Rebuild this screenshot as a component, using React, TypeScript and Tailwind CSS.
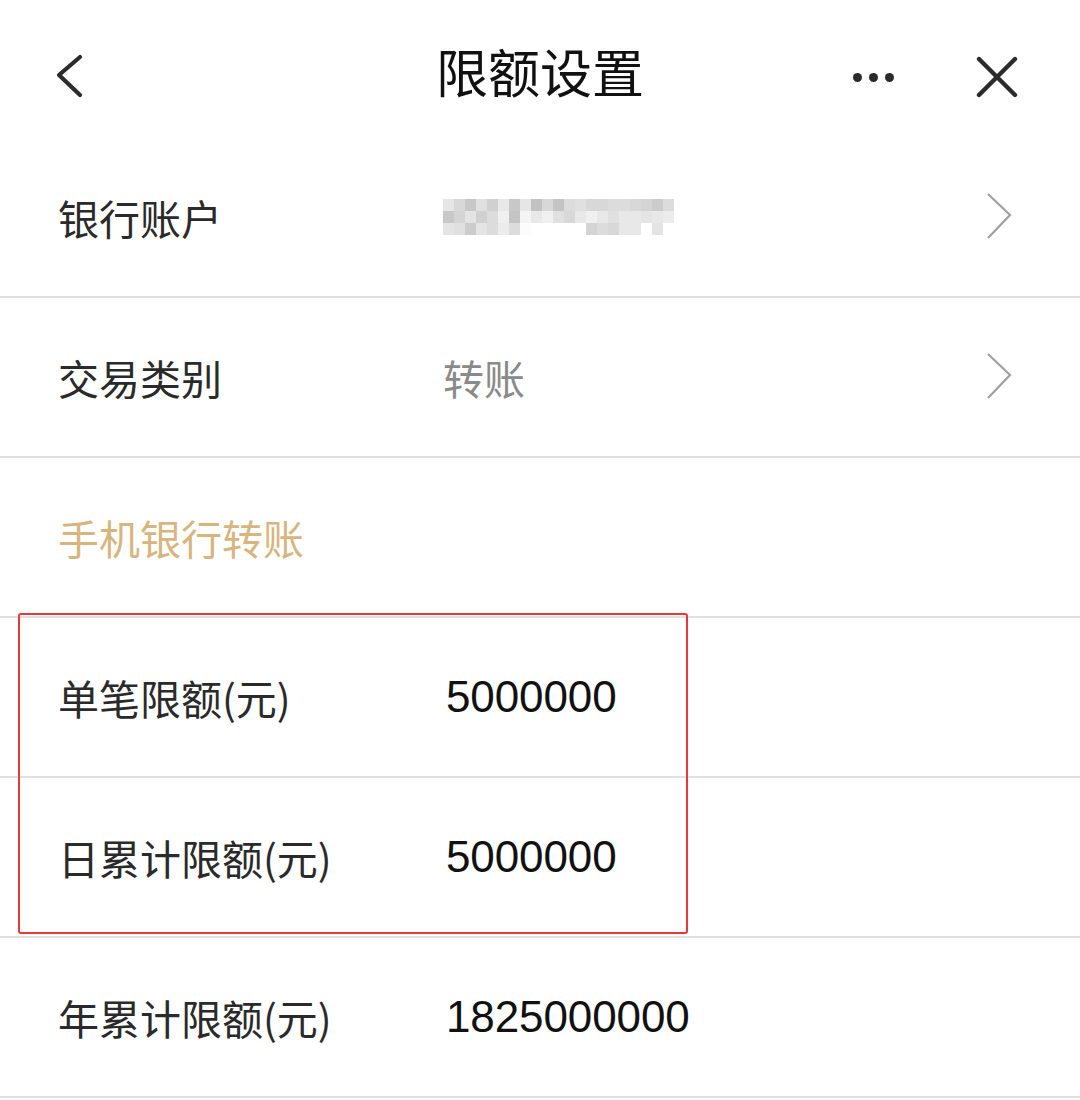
import React from "react";

const CJK = '"Noto Sans CJK SC", "Noto Sans", sans-serif';
const NUM = '"Liberation Sans", Arial, sans-serif';

const blur: string[][] = [
  ["e6", "d8", "c8", "e0", "d0", "e8", "c8", "e6", "c2", "d8", "c4", "dc", "e0", "d8", "d8", "dc", "dc", "d8", "d4", "cc", "dc"],
  ["c8", "d4", "e4", "d0", "dc", "f0", "c4", "f4", "e8", "f0", "e0", "d8", "e8", "f0", "e8", "e0", "e8", "e8", "e4", "e8", "ec"],
  ["e4", "e0", "cc", "e4", "dc", "ec", "dc", "fc", "ff", "ff", "ff", "ff", "ff", "d4", "dc", "d8", "e8", "e8", "ff", "e4", "ff"],
];

function Blurred() {
  return (
    <div className="flex flex-col">
      {blur.map((row, i) => (
        <div key={i} className="flex">
          {row.map((c, j) => (
            <div key={j} className="w-[11px] h-[12px]" style={{ backgroundColor: `#${c}${c}${c}` }} />
          ))}
        </div>
      ))}
    </div>
  );
}

function Chevron() {
  return (
    <svg width="30" height="50" viewBox="0 0 30 50" className="text-[#a0a0a0]">
      <path d="M4 2 L26 23 L4 46" fill="none" stroke="currentColor" strokeWidth="2.2" />
    </svg>
  );
}

function Row({ label, value, chevron, divider = true }: { label: string; value?: React.ReactNode; chevron?: boolean; divider?: boolean }) {
  return (
    <div className={`h-[160px] flex items-center pl-[58px] pr-[66px] ${divider ? "border-b-2 border-[#e1e1e1]" : ""}`}>
      <div className="w-[385px] text-[41px] text-[#2a2a2a] leading-none" style={{ fontFamily: CJK }}>
        {label}
      </div>
      <div className="flex-1 flex items-center">{value}</div>
      {chevron && <Chevron />}
    </div>
  );
}

function Num({ v }: { v: string }) {
  return (
    <span className="ml-[3px] text-[44px] text-[#111] leading-none tracking-[-0.1px]" style={{ fontFamily: NUM }}>
      {v}
    </span>
  );
}

export default function App() {
  return (
    <div className="w-[1080px] h-[1100px] bg-white overflow-hidden">
      {/* header */}
      <div className="h-[138px] relative flex items-center justify-center">
        <div className="absolute left-[54px] top-[54px]">
          <svg width="32" height="44" viewBox="0 0 32 44">
            <path d="M26 3 L5 21 L26 41" fill="none" stroke="#2b2b2b" strokeWidth="4.2" strokeLinecap="round" strokeLinejoin="round" />
          </svg>
        </div>
        <div className="text-[52px] text-[#111] leading-none mt-[3px]" style={{ fontFamily: CJK }}>
          限额设置
        </div>
        <div className="absolute left-[853px] top-[73px] flex gap-[7px]">
          <div className="w-[9px] h-[9px] rounded-full bg-[#2b2b2b]" />
          <div className="w-[9px] h-[9px] rounded-full bg-[#2b2b2b]" />
          <div className="w-[9px] h-[9px] rounded-full bg-[#2b2b2b]" />
        </div>
        <div className="absolute left-[974px] top-[55px]">
          <svg width="46" height="44" viewBox="0 0 46 44">
            <path d="M5 4 L41 40 M41 4 L5 40" fill="none" stroke="#2b2b2b" strokeWidth="4.4" strokeLinecap="round" />
          </svg>
        </div>
      </div>

      <Row label="银行账户" value={<Blurred />} chevron />
      <Row
        label="交易类别"
        value={
          <span className="text-[41px] text-[#8a8a8a] leading-none" style={{ fontFamily: CJK }}>
            转账
          </span>
        }
        chevron
      />
      <div className="h-[160px] flex items-center pl-[58px] border-b-2 border-[#e1e1e1]">
        <span className="text-[41px] text-[#d8b57e] leading-none" style={{ fontFamily: CJK }}>
          手机银行转账
        </span>
      </div>

      <div className="relative">
        <Row label="单笔限额(元)" value={<Num v="5000000" />} />
        <Row label="日累计限额(元)" value={<Num v="5000000" />} />
        <div className="absolute left-[18px] top-[-5px] w-[670px] h-[321px] border-2 border-[#e5393a] rounded-[3px] pointer-events-none" />
      </div>
      <Row label="年累计限额(元)" value={<Num v="1825000000" />} />
    </div>
  );
}
